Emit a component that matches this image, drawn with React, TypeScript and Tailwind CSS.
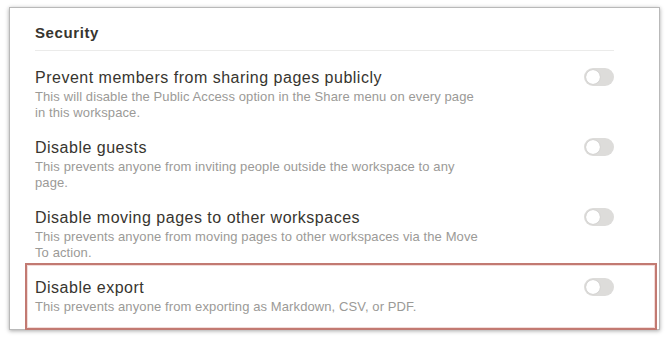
import React from 'react';

type Setting = { title: string; desc: string };

const settings: Setting[] = [
  {
    title: 'Prevent members from sharing pages publicly',
    desc: 'This will disable the Public Access option in the Share menu on every page in this workspace.',
  },
  {
    title: 'Disable guests',
    desc: 'This prevents anyone from inviting people outside the workspace to any page.',
  },
  {
    title: 'Disable moving pages to other workspaces',
    desc: 'This prevents anyone from moving pages to other workspaces via the Move To action.',
  },
  {
    title: 'Disable export',
    desc: 'This prevents anyone from exporting as Markdown, CSV, or PDF.',
  },
];

const Toggle: React.FC = () => (
  <div className="w-[30px] h-[18px] rounded-full bg-[#dddcda] p-[2px] flex items-center shrink-0">
    <div className="w-[14px] h-[14px] rounded-full bg-white shadow-[0_0_1px_rgba(0,0,0,0.25)]" />
  </div>
);

const App: React.FC = () => {
  return (
    <div
      className="w-[669px] h-[342px] bg-white overflow-hidden pl-[9px] pt-[7px]"
      style={{ fontFamily: '"Liberation Sans", Arial, sans-serif' }}
    >
      <div className="relative w-[651px] h-[323px] bg-white border border-[#b9b9b9] shadow-[0_1px_4px_rgba(0,0,0,0.35)] pl-[25px] pr-[45px] pt-[15px]">
        {/* Header */}
        <div className="text-[15px] leading-5 font-semibold tracking-[0.6px] text-[#37352f]">Security</div>
        <div className="mt-[7px] h-px bg-[#ebebea]" />

        {/* Rows */}
        <div className="mt-[17px] flex flex-col gap-[17px]">
          {settings.map((s, i) => (
            <div key={i} className="flex justify-between items-start">
              <div className="w-[446px]">
                <div className="text-[16px] leading-5 tracking-[0.5px] text-[#37352f]">{s.title}</div>
                <div className="mt-[1px] text-[13px] leading-4 tracking-[0.1px] text-[#9b9a97]">{s.desc}</div>
              </div>
              <Toggle />
            </div>
          ))}
        </div>

        {/* Highlight annotation */}
        <div className="absolute left-[15px] top-[255px] w-[632px] h-[67px] border-2 border-[#c27a72] shadow-[inset_0_0_0_1px_#f3dcd9]" />
      </div>
    </div>
  );
};

export default App;
